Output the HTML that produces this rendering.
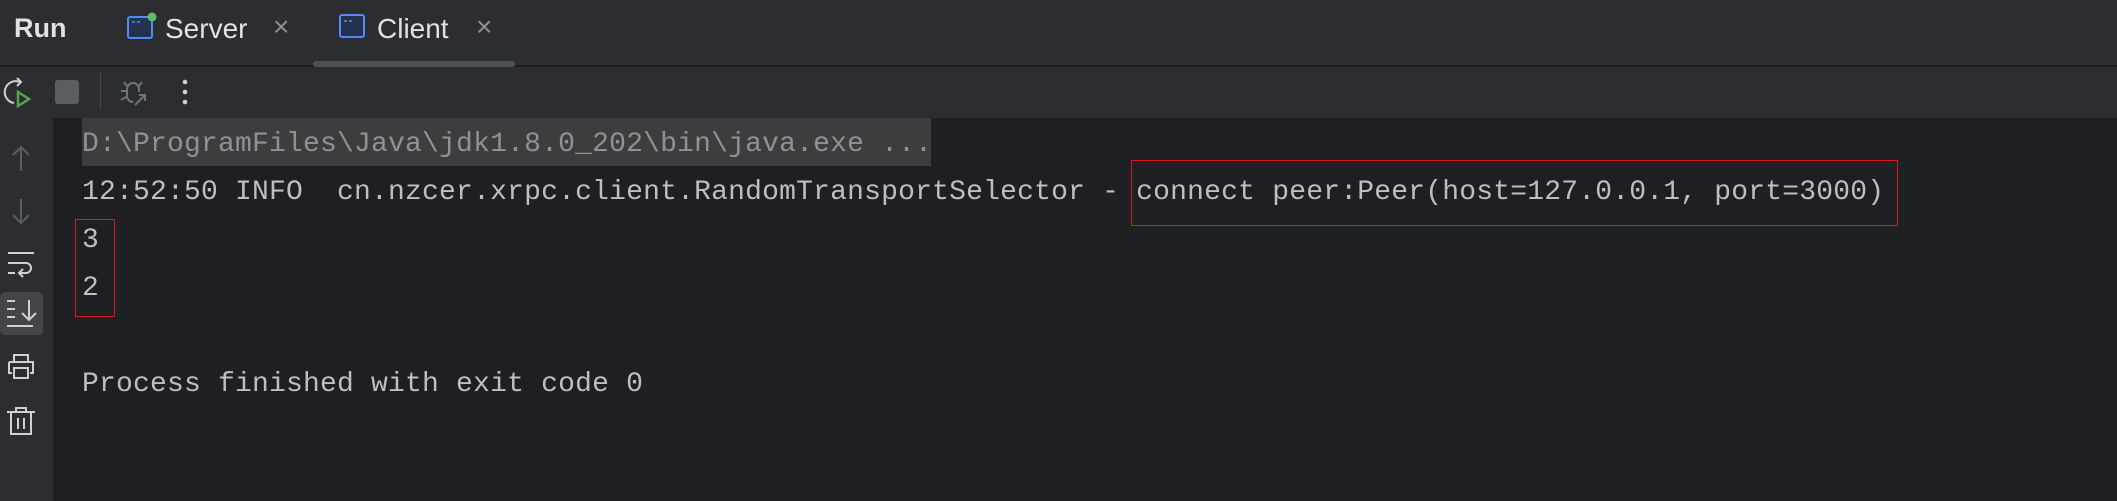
<!DOCTYPE html>
<html><head><meta charset="utf-8"><style>
*{margin:0;padding:0;box-sizing:border-box}
body{width:2117px;height:501px;background:#2b2d30;position:relative;overflow:hidden;font-family:"Liberation Sans",sans-serif}
.abs{position:absolute}
.tabs{color:#dfe1e5;font-size:28px}
.console{left:53px;top:118px;width:2064px;height:383px;background:#1e1f22}
.ln{position:absolute;left:82px;font-family:"Liberation Mono",monospace;font-size:28px;letter-spacing:0.2px;color:#bcbec4;white-space:pre;height:48px;line-height:54px}
</style></head><body>
<div class="abs" style="left:0;top:65px;width:2117px;height:2px;background:#1e1f22"></div>
<div class="abs" style="left:313px;top:61px;width:202px;height:6px;border-radius:3px;background:#4e5157"></div>
<div class="abs tabs" style="left:14px;top:13px;font-weight:bold;font-size:27px">Run</div>
<svg class="abs" style="left:126px;top:12px" width="32" height="28" viewBox="0 0 32 28"><rect x="2" y="5" width="24" height="21" rx="2" fill="#25324d" stroke="#548af7" stroke-width="2"/><path d="M6 10h3M11 10h3" stroke="#548af7" stroke-width="1.5"/><circle cx="26" cy="5" r="4.5" fill="#5fb865"/></svg>
<div class="abs tabs" style="left:165px;top:13px">Server</div>
<div class="abs" style="left:273px;top:11px;color:#8c8f94;font-size:28px">×</div>
<svg class="abs" style="left:338px;top:12px" width="32" height="28" viewBox="0 0 32 28"><rect x="2" y="3" width="24" height="22" rx="2" fill="#25324d" stroke="#548af7" stroke-width="2"/><path d="M6 9h3M11 9h3" stroke="#548af7" stroke-width="1.5"/></svg>
<div class="abs tabs" style="left:377px;top:13px">Client</div>
<div class="abs" style="left:476px;top:11px;color:#8c8f94;font-size:28px">×</div>
<svg class="abs" style="left:0;top:76px" width="34" height="32" viewBox="0 0 34 32"><path d="M20 6A11 11 0 1 0 14 27" fill="none" stroke="#ced0d6" stroke-width="2"/><path d="M17 2l4 4-4 4" fill="none" stroke="#ced0d6" stroke-width="2"/><path d="M18 16l11 7-11 7z" fill="none" stroke="#57a64a" stroke-width="2.5"/></svg>
<div class="abs" style="left:55px;top:80px;width:24px;height:24px;border-radius:3px;background:#5a5d61"></div>
<div class="abs" style="left:100px;top:72px;width:1px;height:38px;background:#43454a"></div>
<svg class="abs" style="left:118px;top:78px" width="30" height="30" viewBox="0 0 30 30" fill="none" stroke="#6f737a" stroke-width="2"><path d="M9 11a6 6 0 0 1 12 0v3M9 11v7a6 6 0 0 0 6 6M3 13h6M3 22l5-3M6 4l3 4M24 4l-3 4M17 27l10-10M21 17h6v6"/></svg>
<svg class="abs" style="left:180px;top:78px" width="10" height="28"><circle cx="5" cy="4" r="2.3" fill="#ced0d6"/><circle cx="5" cy="14" r="2.3" fill="#ced0d6"/><circle cx="5" cy="24" r="2.3" fill="#ced0d6"/></svg>
<svg class="abs" style="left:8px;top:145px" width="28" height="300" viewBox="0 0 28 300" fill="none" stroke-width="2">
<g stroke="#5a5d63"><path d="M13 2v24M5 10l8-8 8 8"/><path d="M13 54v24M5 70l8 8 8-8"/></g>
<g stroke="#ced0d6"><path d="M0 108h26M0 118h18a5 5 0 0 1 0 10h-6M15 124l-4 4 4 4M0 128h7"/></g>
</svg>
<div class="abs" style="left:0;top:292px;width:43px;height:43px;border-radius:5px;background:#43454a"></div>
<svg class="abs" style="left:5px;top:295px" width="34" height="38" viewBox="0 0 34 38" fill="none" stroke="#ced0d6" stroke-width="2"><path d="M2 6h8M2 14h8M2 22h8M2 31h26M24 5v20M17 18l7 7 7-7"/></svg>
<svg class="abs" style="left:5px;top:352px" width="34" height="90" viewBox="0 0 34 90" fill="none" stroke="#ced0d6" stroke-width="2"><path d="M9 10V3h14v7M4 10h24v11h-3M7 21H4V10M9 16h14v10H9z"/><path d="M2 60h28M11 60v-4h10v4M6 60v22h20V60M13 66v11M19 66v11"/></svg>
<div class="abs console"></div>
<div class="abs" style="left:82px;top:118px;width:849px;height:48px;background:#3c3d3f"></div>
<div class="ln" style="top:118px;color:#8f9195">D:\ProgramFiles\Java\jdk1.8.0_202\bin\java.exe ...</div>
<div class="ln" style="top:166px">12:52:50 INFO  cn.nzcer.xrpc.client.RandomTransportSelector - connect peer:Peer(host=127.0.0.1, port=3000)</div>
<div class="ln" style="top:214px">3</div>
<div class="ln" style="top:262px">2</div>
<div class="ln" style="top:358px">Process finished with exit code 0</div>
<div class="abs" style="left:1131px;top:160px;width:767px;height:66px;border:1.5px solid #e0161b"></div>
<div class="abs" style="left:75px;top:219px;width:40px;height:98px;border:1.5px solid #e0161b"></div>
</body></html>
